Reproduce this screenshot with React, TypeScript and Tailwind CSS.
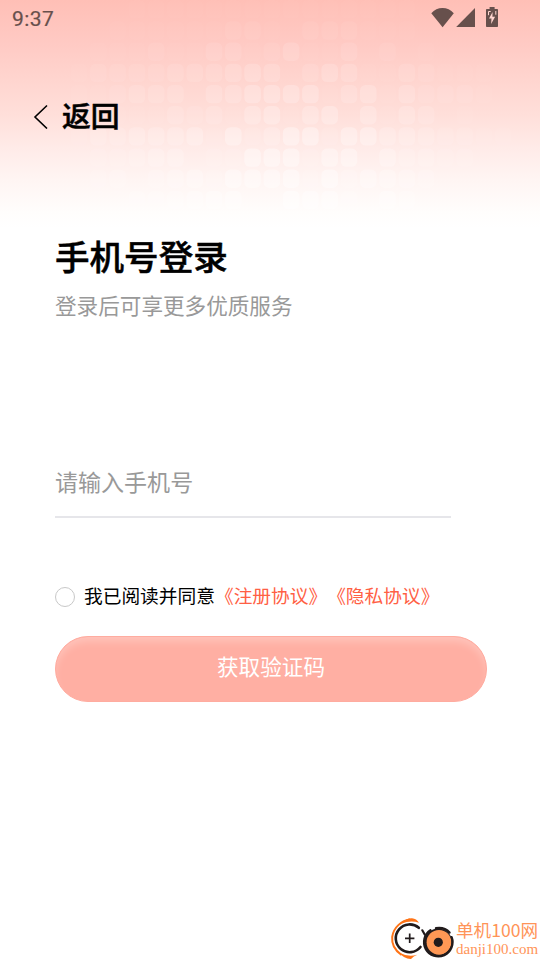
import { useState } from "react";

// opacity level of every tile, 0-9, one string per row
const tiles = [
  "00000111111111111111000000",
  "00001111112210222111000000",
  "00011121133124113020100000",
  "00122223334540354113211100",
  "00112333044666614514222100",
  "00011113231561560514301000",
  "00133444517248827744322110",
  "00122344022888277153322100",
  "01123034527778283654311000",
  "00122334566118773064000000",
  "00000122233344433332210000",
];

function TilePattern() {
  return (
    <svg className="block h-full w-full" viewBox="0 0 540 232">
      {tiles.map((row, y) =>
        row.split("").map((level, x) => (
          <rect
            key={`${x}-${y}`}
            x={32.2 + x * 19.28}
            y={0.2 + y * 21.17}
            width="16.6"
            height="18.4"
            rx="5.5"
            fill="#fff"
            opacity={Number(level) * (0.024 + y * 0.003)}
          />
        ))
      )}
    </svg>
  );
}

function StatusBar() {
  return (
    <div className="flex h-9 items-center justify-between pl-3 pr-[41px] text-[#67504c]">
      <span className="pt-0.5 font-[Roboto,sans-serif] text-[21px] leading-none tracking-[0.4px] [-webkit-text-stroke:0.2px]">
        9:37
      </span>
      <svg className="h-9 w-[68px]" viewBox="0 0 68 36" fill="currentColor">
        <path d="M0.3 13.2C6 6.3 17 6.3 22.8 13.2L11.6 27.2Z" />
        <path d="M44 8v19H25.2Z" />
        <path d="M58.600 7h5v2h2.600q.8 0 .8.8v16.400q0 .8-.8.8H55.800q-.8 0-.8-.8V9.800q0-.8.8-.8h2.800Z" />
        <path d="M57.500 15.200v-3.700h2.200M64.800 11v3.700" fill="none" stroke="#ffd5cf" strokeWidth="1" />
        <path d="M61.600 12 58 18.500h2.500l-.4 5.500 4-7.200h-2.700Z" fill="#ffd5cf" />
      </svg>
    </div>
  );
}

function Watermark() {
  return (
    <div className="absolute right-0 bottom-0 flex h-[46px] w-[151px] items-center">
      <svg className="h-[46px] w-[67px] shrink-0" viewBox="0 0 67 46">
        <path
          d="M21 5.500C13 6.500 4.500 13 3.200 23 2.500 30 5.500 36 12.500 41"
          fill="none"
          stroke="#ff7417"
          strokeWidth="2"
        />
        <path
          d="M12.500 9.500Q17 4 23 4.200q4.500.3 7 4.600-8-3-17.500.7ZM10 38.500q9 5 18.300 2.200-3.800 1.300-6.300 4.200-7 .2-12-6.400Z"
          fill="#ff7417"
        />
        <circle cx="20.700" cy="24.300" r="13.800" fill="#fff" />
        <path d="M29.800 13.800A13.900 13.900 0 1 0 31.500 33" fill="none" stroke="#211b1c" strokeWidth="2.600" strokeLinecap="round" />
        <path d="M16 24.300h9.400M20.700 19.600v9.400" stroke="#211b1c" strokeWidth="1.700" />
        <circle cx="49.300" cy="28.300" r="13.800" fill="#211b1c" />
        <circle cx="50" cy="28.300" r="12.400" fill="#ff9855" />
        <path
          d="M41.500 16.300A14.200 14.200 0 1 0 62.600 23.200M47 14.200Q55.500 12.800 60.500 18.600"
          fill="none"
          stroke="#211b1c"
          strokeWidth="2.400"
          strokeLinecap="round"
        />
        <path d="m33.300 16.300 2.400 4.200" fill="none" stroke="#211b1c" strokeWidth="2.200" strokeLinecap="round" />
        <circle cx="49.300" cy="28.300" r="4.600" fill="#211b1c" />
      </svg>
      <div className="whitespace-nowrap pt-[5px] text-[#ff9458]">
        <div className="flex h-[19px] items-center text-[17.600px] leading-none">单机100网</div>
        <div className="flex h-[19px] items-center font-['Liberation_Serif',serif] text-[15px] leading-none">danji100.com</div>
      </div>
    </div>
  );
}

export default function App() {
  const [phone, setPhone] = useState("");
  const [agreed, setAgreed] = useState(false);

  return (
    <div className="relative h-[960px] w-[540px] overflow-hidden bg-white font-['Noto_Sans_CJK_SC',sans-serif] text-black">
      {/* Background */}
      <div className="absolute inset-x-0 top-0 h-[232px] bg-[linear-gradient(to_bottom,#ffbfb6_0px,#ffcac4_44px,#ffd5cf_80px,#ffdfda_115px,#ffebe8_148px,#fff5f3_180px,#fffdfc_212px,#ffffff_228px)]">
        <TilePattern />
      </div>

      <div className="relative flex h-full flex-col">
        <StatusBar />

        <button className="mt-[59px] ml-[33px] flex h-[42px] w-fit items-center gap-[14px]">
          <svg className="h-[26px] w-[15px]" viewBox="0 0 15 26" fill="none" stroke="#000" strokeWidth="1.600">
            <path d="M14 2.500 2 14l12 11.500" />
          </svg>
          <span className="pb-[3px] text-[28.800px] font-medium leading-[39px] [-webkit-text-stroke:0.5px]">返回</span>
        </button>

        <div className="px-[55px]">
          <h1 className="mt-[93px] text-[34.560px] font-medium leading-[50px] [-webkit-text-stroke:0.5px]">手机号登录</h1>
          <p className="mt-[9px] text-[21.600px] leading-[32px] text-[#999999]">登录后可享更多优质服务</p>

          {/* Phone */}
          <input
            value={phone}
            onChange={(e) => setPhone(e.target.value)}
            placeholder="请输入手机号"
            className="mt-[127px] block h-[70px] w-[396px] border-b-2 border-[#e6e6ea] pb-0.5 text-[23.040px] outline-none placeholder:text-[#999999]"
          />

          {/* Agreement */}
          <div className="mt-[63px] flex h-[28px] items-center gap-[9px]">
            <button
              aria-pressed={agreed}
              onClick={() => setAgreed(!agreed)}
              className={`mt-1 h-5 w-5 rounded-full border ${agreed ? "border-[#ff6044] bg-[#ff6044]" : "border-[#c8c8c8] bg-white"}`}
            />
            <p className="whitespace-nowrap text-[18.720px] leading-[28px] [text-spacing-trim:space-all]">
              我已阅读并同意<span className="text-[#ff6044]">《注册协议》《隐私协议》</span>
            </p>
          </div>

          <button className="mt-[27px] flex h-[66px] w-[432px] items-center justify-center rounded-full border border-[#ffaca0] bg-[#ffafa3] pb-1.5 text-[21.600px] text-white shadow-[inset_0_6px_8px_-2px_rgba(255,255,255,0.280)]">
            获取验证码
          </button>
        </div>
      </div>

      <Watermark />
    </div>
  );
}
